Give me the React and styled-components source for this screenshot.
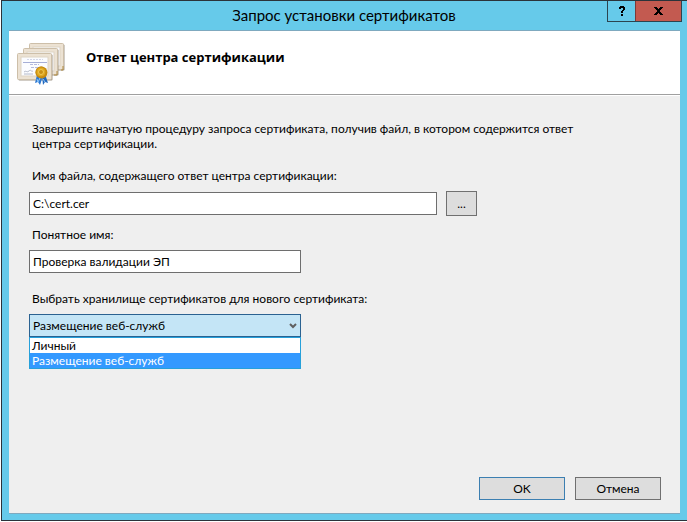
import React, { useState } from "react";
import styled, { createGlobalStyle } from "styled-components";

const GlobalStyle = createGlobalStyle`
  *, *::before, *::after { box-sizing: border-box; }
  body {
    margin: 0;
    background: #fff;
    color: #000;
    font: 12px/15px Lato, "Open Sans", sans-serif;
  }
  button, input, select { font: inherit; color: inherit; border-radius: 0; }
`;

const Desktop = styled.div`
  display: flex;
  min-height: 100vh;
  padding: 0 0 1px 1px;
`;

const Dialog = styled.section`
  flex: 1;
  display: flex;
  flex-direction: column;
  padding: 0 7px 6px 7px;
  background: #66caea;
  border: solid #2b333a;
  border-width: 1px 0 1px 1px;
`;

const TitleBar = styled.header`
  display: flex;
  align-items: flex-start;
  height: 29px;
  margin-right: -2px;
`;

const WindowTitle = styled.h1`
  flex: 1;
  margin: 0;
  padding-left: 72px;
  font-size: 15px;
  line-height: 28px;
  font-weight: 400;
  text-align: center;
`;

const CaptionButtons = styled.div`
  display: flex;
  border: solid #2b4450;
  border-width: 0 1px 1px;
`;

const CaptionButton = styled.button`
  display: grid;
  place-items: center;
  width: ${(p) => (p.$close ? 46 : 27)}px;
  height: 20px;
  padding: 0;
  border: 0;
  border-left: ${(p) => (p.$close ? "1px solid #7c3a38" : "0")};
  background: ${(p) => (p.$close ? "#c35a50" : "transparent")};
`;

const Client = styled.main`
  flex: 1;
  display: flex;
  flex-direction: column;
  background: #efefef;
  border: solid #7fa9bf;
  border-width: 1px 0;
`;

const Banner = styled.div`
  display: flex;
  align-items: center;
  gap: 19px;
  height: 65px;
  padding: 0 8px 12px;
  background: #fff;
  border-bottom: 1px solid #fff;
  box-shadow: inset 0 -1px #a0a0a0;
`;

const BannerIcon = styled.svg`
  width: 50px;
  height: 46px;
  margin-top: 14px;
`;

const BannerTitle = styled.h2`
  margin: 0;
  font: 700 13px/18px "Open Sans", "Noto Sans", sans-serif;
`;

const Form = styled.form`
  flex: 1;
  display: flex;
  flex-direction: column;
  padding: 25px 19px 13px 20px;
`;

const Intro = styled.p`
  max-width: 560px;
  margin: 0 0 17px 3px;
`;

const Field = styled.div`
  display: flex;
  flex-direction: column;
  gap: 8px;
  margin-bottom: ${(p) => p.$after}px;
`;

const Label = styled.label`
  padding-left: 3px;
`;

const FileRow = styled.div`
  display: flex;
  align-items: center;
  gap: 9px;
`;

const TextBox = styled.input`
  width: ${(p) => p.$width}px;
  height: 23px;
  padding: 0 3px;
  border: 1px solid #6e6e6e;
  background: #fff;
  outline: none;
`;

const Button = styled.button`
  width: ${(p) => (p.$small ? 31 : 86)}px;
  height: ${(p) => (p.$small ? 25 : 23)}px;
  padding: 0;
  border: 1px solid ${(p) => (p.$primary ? "#3c7fb1" : "#707070")};
  background: #dddddd;
`;

const Combo = styled.div`
  position: relative;
  width: 272px;
`;

const StoreSelect = styled.select`
  display: block;
  width: 100%;
  height: 23px;
  padding: 0 20px 0 3px;
  border: 1px solid #2b6291;
  background: #c4e5f6;
  appearance: none;
  outline: none;
`;

const Chevron = styled.svg`
  position: absolute;
  top: 9px;
  right: 4px;
  width: 8px;
  height: 6px;
  pointer-events: none;
`;

const OptionList = styled.ul`
  position: absolute;
  top: 100%;
  left: 0;
  right: 0;
  margin: 0;
  padding: 0;
  list-style: none;
  border: 1px solid #26a0da;
  background: #fff;
`;

const OptionItem = styled.li`
  padding: 0 2px;
  background: ${(p) => (p.$selected ? "#3399ff" : "transparent")};
  color: ${(p) => (p.$selected ? "#fff" : "#000")};
`;

const Actions = styled.div`
  display: flex;
  justify-content: flex-end;
  gap: 10px;
  margin-top: auto;
`;

const STORES = ["Личный", "Размещение веб-служб"];

function Certificate({ x, y }) {
  return (
    <g transform={`translate(${x} ${y})`}>
      <rect x="1" y="1" width="34" height="26" rx="1" fill="#a39a8c" />
      <rect width="34" height="26" rx="1" fill="#ece2d3" stroke="#cdbfa9" />
      <rect x="3.5" y="3.5" width="27" height="19" fill="#fbfcff" stroke="#ddd3c4" />
    </g>
  );
}

function CertificatesIcon() {
  return (
    <BannerIcon viewBox="0 0 50 46" aria-hidden="true">
      <Certificate x={12.5} y={2.5} />
      <path d="M44 29h2v-4" stroke="#b08a40" strokeWidth="1" fill="none" />
      <Certificate x={6.5} y={7.5} />
      <path d="M37 34h3v-4" stroke="#b08a40" strokeWidth="1" fill="none" />
      <Certificate x={0.5} y={12.5} />
      <path d="M10 18.5h16" stroke="#d3d7e8" strokeDasharray="2 1" />
      <path d="M6 21.5h24" stroke="#a6aed6" />
      <path d="M13 23.5h9M14 26.500h8" stroke="#b4bade" strokeDasharray="3 1" />
      <path d="M7 31c2-2 3 1 5-1s2 1 4 0M7 33h9" stroke="#a3aabc" strokeWidth="0.8" fill="none" />
      <path d="M20 34l-2 8 3-1 2 3 3-9z" fill="#2d79d2" />
      <path d="M25 35l1 9 2-3 3 1-3-9z" fill="#2268bd" />
      <path d="M20 38l1 3 2-4M26 38l2 3" stroke="#8fc6f7" fill="none" />
      <circle cx="24.5" cy="31.500" r="6" fill="#c78a0c" />
      <circle cx="24" cy="31" r="5" fill="#e0a820" stroke="#c48a10" />
      <circle cx="24" cy="31" r="2.500" fill="#c98f12" stroke="#f0c850" />
    </BannerIcon>
  );
}

export default function App() {
  const [file, setFile] = useState("C:\\cert.cer");
  const [name, setName] = useState("Проверка валидации ЭП");
  const [store, setStore] = useState(STORES[1]);

  return (
    <>
      <GlobalStyle />
      <Desktop>
        <Dialog aria-labelledby="window-title">
          <TitleBar>
            <WindowTitle id="window-title">Запрос установки сертификатов</WindowTitle>
            <CaptionButtons>
              <CaptionButton type="button" aria-label="Справка">
                <svg width="8" height="11" viewBox="0 0 8 11" shapeRendering="crispEdges">
                  <path d="M1 1h1V0h4v1h1v3H6v1H5v2H3V5h1V4h1V2H3v1H1zM3 8h2v2H3z" fill="#000" />
                </svg>
              </CaptionButton>
              <CaptionButton type="button" $close aria-label="Закрыть">
                <svg width="9" height="8" viewBox="0 0 9 8" shapeRendering="crispEdges">
                  <path d="M0 0h3v1h1v1h1V1h1V0h3v1H8v1H7v1H6v2h1v1h1v1h1v1H6V7H5V6H4v1H3v1H0V7h1V6h1V5h1V3H2V2H1V1H0z" fill="#000" />
                </svg>
              </CaptionButton>
            </CaptionButtons>
          </TitleBar>
          <Client>
            <Banner>
              <CertificatesIcon />
              <BannerTitle>Ответ центра сертификации</BannerTitle>
            </Banner>
            <Form onSubmit={(e) => e.preventDefault()}>
              <Intro>
                Завершите начатую процедуру запроса сертификата, получив файл, в котором содержится ответ центра
                сертификации.
              </Intro>
              <Field $after={11}>
                <Label htmlFor="file">Имя файла, содержащего ответ центра сертификации:</Label>
                <FileRow>
                  <TextBox id="file" $width={408} value={file} onChange={(e) => setFile(e.target.value)} />
                  <Button type="button" $small aria-label="Обзор">...</Button>
                </FileRow>
              </Field>
              <Field $after={18}>
                <Label htmlFor="name">Понятное имя:</Label>
                <TextBox id="name" $width={272} value={name} onChange={(e) => setName(e.target.value)} />
              </Field>
              <Field $after={0}>
                <Label htmlFor="store">Выбрать хранилище сертификатов для нового сертификата:</Label>
                <Combo>
                  <StoreSelect id="store" value={store} onChange={(e) => setStore(e.target.value)}>
                    {STORES.map((s) => (
                      <option key={s}>{s}</option>
                    ))}
                  </StoreSelect>
                  <Chevron viewBox="0 0 8 6" aria-hidden="true">
                    <path d="M1 1l3 3 3-3" fill="none" stroke="#606060" strokeWidth="2" />
                  </Chevron>
                  <OptionList role="listbox" aria-label="Хранилище сертификатов">
                    {STORES.map((s) => (
                      <OptionItem
                        key={s}
                        role="option"
                        aria-selected={s === store}
                        $selected={s === store}
                        onClick={() => setStore(s)}
                      >
                        {s}
                      </OptionItem>
                    ))}
                  </OptionList>
                </Combo>
              </Field>
              <Actions>
                <Button type="submit" $primary>OK</Button>
                <Button type="button">Отмена</Button>
              </Actions>
            </Form>
          </Client>
        </Dialog>
      </Desktop>
    </>
  );
}
